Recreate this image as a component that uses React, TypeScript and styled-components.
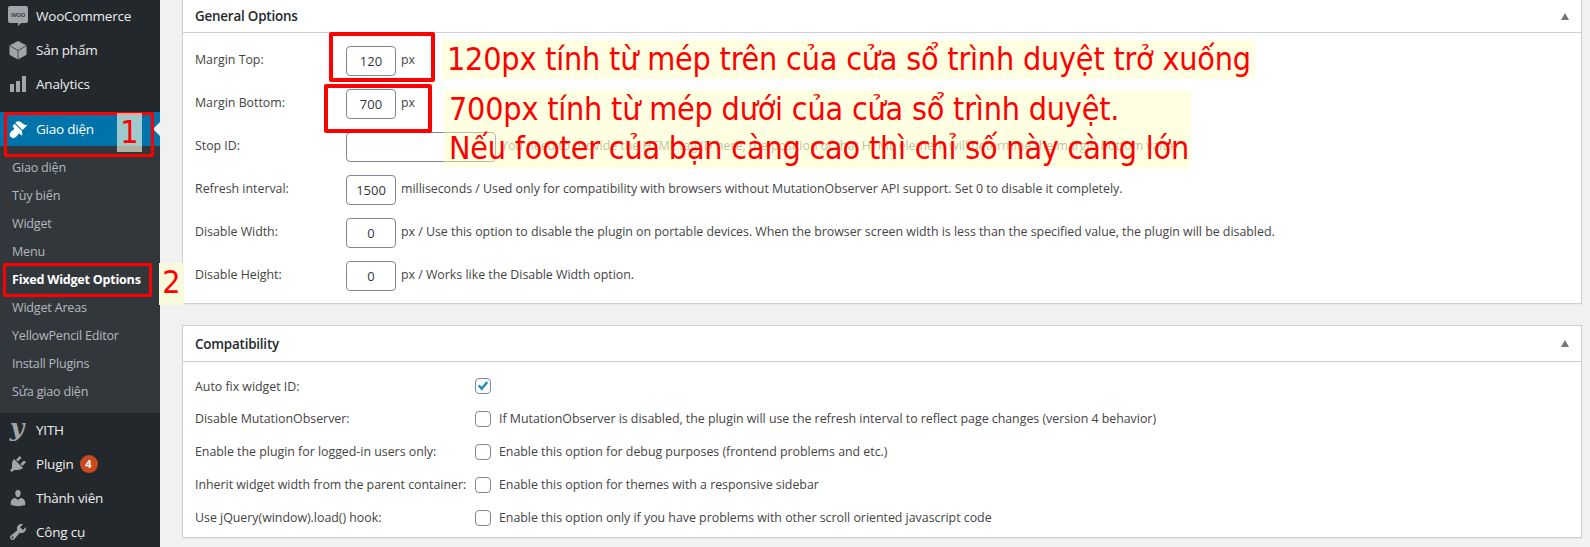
import React from "react";
import styled, { createGlobalStyle } from "styled-components";

const UI_FONT = `"Open Sans", "Noto Sans", sans-serif`;
const NOTE_FONT = `"DejaVu Sans Condensed", "DejaVu Sans", sans-serif`;

const GlobalStyle = createGlobalStyle`
  html, body { margin: 0; padding: 0; background: #f1f1f1; }
  body { font-family: ${UI_FONT}; font-size: 13px; }
  * { box-sizing: border-box; }
`;

//layout//

const Page = styled.div`
  position: relative;
  display: flex;
  width: 1590px;
  height: 547px;
  overflow: hidden;
`;

const Sidebar = styled.nav`
  width: 160px;
  flex-shrink: 0;
  background: #23282d;
  margin-top: -1px;
`;

const MenuGroup = styled.div<{ $gap?: number }>`
  margin-bottom: ${(p) => p.$gap ?? 0}px;
`;

const MenuItem = styled.div<{ $active?: boolean }>`
  position: relative;
  display: flex;
  align-items: center;
  height: 34px;
  padding-left: 8px;
  color: ${(p) => (p.$active ? "#fff" : "#eee")};
  background: ${(p) => (p.$active ? "#0073aa" : "transparent")};
  font-size: 13.5px;
  letter-spacing: -0.22px;
  svg {
    flex-shrink: 0;
    margin-right: 8px;
  }
  ${(p) =>
    p.$active &&
    `&::after {
      content: "";
      position: absolute;
      right: 0;
      top: 10px;
      border: 7px solid transparent;
      border-right-color: #f1f1f1;
      border-left-width: 0;
    }`}
`;

const SubMenu = styled.div`
  background: #32373c;
  padding: 7px 0 7px;
`;

const SubItem = styled.div<{ $current?: boolean }>`
  display: flex;
  align-items: center;
  height: 28.1px;
  padding-left: 12px;
  color: ${(p) => (p.$current ? "#fff" : "#b4b9be")};
  font-weight: ${(p) => (p.$current ? 700 : 400)};
  font-size: 12.6px;
  letter-spacing: ${(p) => (p.$current ? "-0.25px" : "-0.22px")};
`;

const Badge = styled.span`
  display: inline-flex;
  align-items: center;
  justify-content: center;
  width: 18px;
  height: 18px;
  margin-left: 6px;
  border-radius: 50%;
  background: #ca4a1f;
  color: #fff;
  font-size: 11px;
  font-weight: 700;
  letter-spacing: 0;
`;

const Main = styled.main`
  flex: 1;
  padding: 0 8px 0 22px;
`;

const Card = styled.section<{ $clipped?: boolean; $height: number }>`
  height: ${(p) => p.$height}px;
  margin-bottom: 21px;
  background: #fff;
  border: 1px solid #ccd0d4;
  border-top-width: ${(p) => (p.$clipped ? 0 : 1)}px;
  box-shadow: 0 1px 1px rgba(0, 0, 0, 0.04);
`;

const CardHeader = styled.header<{ $height: number }>`
  display: flex;
  align-items: center;
  justify-content: space-between;
  height: ${(p) => p.$height}px;
  padding: 0 12px;
  border-bottom: 1px solid #ccd0d4;
`;

const CardTitle = styled.h2`
  margin: 0;
  font-size: 13.4px;
  font-weight: 600;
  letter-spacing: -0.2px;
  color: #23282d;
`;

const CollapseArrow = styled.span`
  width: 0;
  height: 0;
  border-left: 4px solid transparent;
  border-right: 4px solid transparent;
  border-bottom: 7px solid #72777c;
`;

const OptionList = styled.div`
  padding-top: 13px;
`;

const OptionRow = styled.div`
  display: flex;
  align-items: center;
  height: 30px;
  margin-bottom: 13px;
  color: #444;
  font-size: 12.4px;
  letter-spacing: -0.02px;
`;

const OptionLabel = styled.div`
  width: 163px;
  flex-shrink: 0;
  padding: 0 0 4px 12px;
`;

const NumberInput = styled.input<{ $wide?: boolean }>`
  width: ${(p) => (p.$wide ? 150 : 50)}px;
  height: 30px;
  padding: 0;
  border: 1px solid #7e8993;
  border-radius: 4px;
  background: #fff;
  color: #32373c;
  font-family: ${UI_FONT};
  font-size: 13px;
  text-align: center;
  outline: none;
`;

const OptionNote = styled.span<{ $muted?: boolean }>`
  margin-left: 5px;
  padding-bottom: 3px;
  white-space: nowrap;
  color: ${(p) => (p.$muted ? "#8f8f8f" : "#444")};
`;

const CheckList = styled.div`
  padding-top: 16px;
`;

const CheckRow = styled.div`
  display: flex;
  align-items: center;
  height: 16px;
  margin-bottom: 16.9px;
  padding-left: 12px;
  color: #444;
  font-size: 12.4px;
  letter-spacing: -0.02px;
`;

const CheckLabel = styled.div`
  width: 280px;
  flex-shrink: 0;
  white-space: nowrap;
`;

const CheckBox = styled.span`
  display: inline-flex;
  align-items: center;
  justify-content: center;
  width: 16px;
  height: 16px;
  flex-shrink: 0;
  margin-right: 8px;
  border: 1px solid #7e8993;
  border-radius: 4px;
  background: #fff;
`;

//annotations drawn over the page//

const RedBox = styled.div<{ $x: number; $y: number; $w: number; $h: number; $t?: number }>`
  position: absolute;
  left: ${(p) => p.$x}px;
  top: ${(p) => p.$y}px;
  width: ${(p) => p.$w}px;
  height: ${(p) => p.$h}px;
  border: ${(p) => p.$t ?? 4}px solid #fe0000;
  border-radius: 2px;
`;

const StepNumber = styled.div<{ $x: number; $y: number; $h: number; $soft?: boolean }>`
  position: absolute;
  left: ${(p) => p.$x}px;
  top: ${(p) => p.$y}px;
  width: 25px;
  height: ${(p) => p.$h}px;
  background: ${(p) => (p.$soft ? "rgba(255, 255, 224, 0.62)" : "#f9f9dc")};
  color: #fe0000;
  font-family: ${NOTE_FONT};
  font-size: 32px;
  line-height: 38px;
  text-align: center;
`;

const Callout = styled.div<{ $x: number; $y: number; $w: number }>`
  position: absolute;
  left: ${(p) => p.$x}px;
  top: ${(p) => p.$y}px;
  width: ${(p) => p.$w}px;
  padding-left: 5px;
  background: rgba(255, 255, 190, 0.45);
  color: #fe0000;
  font-family: ${NOTE_FONT};
  font-size: 32px;
  letter-spacing: -0.2px;
  line-height: 39px;
  white-space: nowrap;
`;

////////////////////

const ICON = "#a0a5aa";

const WooIcon = () => (
  <svg width="20" height="24" viewBox="0 0 20 24">
    <path d="M2 2h16a2 2 0 0 1 2 2v13a2 2 0 0 1-2 2h-5l-3 3v-3H2a2 2 0 0 1-2-2V4a2 2 0 0 1 2-2z" fill={ICON} />
    <text x="10" y="13" textAnchor="middle" fontSize="8" fill="#23282d" fontFamily="Liberation Sans, sans-serif">woo</text>
  </svg>
);

const BoxIcon = () => (
  <svg width="20" height="20" viewBox="0 0 20 20">
    <path d="M10 1l8.5 4.6v9.2L10 19.4 1.500 14.8V5.600z" fill={ICON} />
    <path d="M1.500 5.600L10 10.500l8.500-4.900M10 10.500v8.900" fill="none" stroke="#23282d" strokeWidth="0.7" />
  </svg>
);

const DashIcon = ({ d, color = ICON }: { d: string; color?: string }) => (
  <svg width="20" height="20" viewBox="0 0 20 20">
    <path d={d} fill={color} />
  </svg>
);

const YithIcon = () => (
  <svg width="20" height="28" viewBox="0 0 20 28">
    <text x="9" y="20" textAnchor="middle" fontSize="25" fontStyle="italic" fontWeight="700" fill={ICON} fontFamily="DejaVu Serif, serif">y</text>
  </svg>
);

const CheckMark = () => (
  <svg width="14" height="14" viewBox="0 0 14 14">
    <path d="M1.800 7.200l1.700-1.700 2.200 2.300 4.700-5.600 1.800 1.500-6.400 7.700z" fill="#1e8cbe" />
  </svg>
);

const paths = {
  chart: "M18 18V2h-4v16h4zm-6 0V7H8v11h4zm-6 0v-8H2v8h4z",
  brush:
    "M14.480 11.060L7.410 3.990l1.500-1.500c.5-.56 2.300-.47 3.510.32 1.210.8 1.430 1.280 2.910 2.100 1.180.64 2.450 1.260 4.450.85zm-.71.71L6.700 4.700 4.930 6.470c-.39.39-.39 1.020 0 1.410l1.060 1.060c.39.39.39 1.030 0 1.420-.6.6-1.430 1.110-2.210 1.690-.35.26-.7.53-1.010.84-1.430 1.430-1.400 3.750.03 5.180 1.430 1.430 3.750 1.460 5.180.03.31-.31.58-.66.84-1.010.58-.78 1.090-1.610 1.690-2.210.39-.39 1.030-.39 1.420 0l1.060 1.060c.39.39 1.020.39 1.410 0z",
  plugin:
    "M13.110 4.360L9.870 7.600 8 5.730l3.240-3.240c.35-.34 1.050-.2 1.560.32.52.51.66 1.210.31 1.550zm-8 1.770l.91-1.120 9.010 9.010-1.190.84c-.71.71-2.630 1.160-3.820 1.160H6.140L4.900 17.260c-.59.59-1.540.59-2.120 0-.59-.58-.59-1.530 0-2.120l1.240-1.240v-3.880c0-1.130.4-3.190 1.090-3.890zm7.260 3.970l3.240-3.240c.34-.35 1.040-.21 1.550.31.52.51.66 1.210.31 1.550l-3.240 3.250z",
  users:
    "M10 9.250c-2.270 0-2.730-3.440-2.730-3.440C7 4.020 7.820 2 9.970 2c2.160 0 2.980 2.020 2.710 3.810 0 0-.41 3.440-2.680 3.440zm0 2.570L12.720 10c2.390 0 4.520 2.330 4.520 4.530v2.490s-3.650 1.130-7.240 1.130c-3.650 0-7.240-1.130-7.240-1.130v-2.490c0-2.250 1.940-4.480 4.470-4.480z",
  tools:
    "M16.680 9.770c-1.340 1.340-3.300 1.670-4.950.99l-5.410 6.520c-.99.99-2.590.99-3.580 0s-.99-2.590 0-3.570l6.520-5.420c-.68-1.650-.35-3.610.99-4.950 1.280-1.280 3.120-1.620 4.720-1.060l-2.890 2.890 2.820 2.820 2.860-2.870c.53 1.580.18 3.390-1.080 4.650zM3.810 16.210c.4.39 1.040.39 1.430 0 .4-.4.4-1.040 0-1.430-.39-.4-1.030-.4-1.430 0-.39.39-.39 1.030 0 1.430z",
};

const subItems = [
  "Giao diện",
  "Tùy biến",
  "Widget",
  "Menu",
  "Fixed Widget Options",
  "Widget Areas",
  "YellowPencil Editor",
  "Install Plugins",
  "Sửa giao diện",
];

const generalOptions = [
  { label: "Margin Top:", value: "120", note: "px" },
  { label: "Margin Bottom:", value: "700", note: "px" },
  {
    label: "Stop ID:",
    value: "",
    wide: true,
    muted: true,
    note: "You need to provide the HTML tag ID here, the position of that HTML element will determine the margin bottom value",
  },
  {
    label: "Refresh interval:",
    value: "1500",
    note: "milliseconds / Used only for compatibility with browsers without MutationObserver API support. Set 0 to disable it completely.",
  },
  {
    label: "Disable Width:",
    value: "0",
    note: "px / Use this option to disable the plugin on portable devices. When the browser screen width is less than the specified value, the plugin will be disabled.",
  },
  { label: "Disable Height:", value: "0", note: "px / Works like the Disable Width option." },
];

const compatibility = [
  { label: "Auto fix widget ID:", checked: true, note: "" },
  {
    label: "Disable MutationObserver:",
    note: "If MutationObserver is disabled, the plugin will use the refresh interval to reflect page changes (version 4 behavior)",
  },
  {
    label: "Enable the plugin for logged-in users only:",
    note: "Enable this option for debug purposes (frontend problems and etc.)",
  },
  {
    label: "Inherit widget width from the parent container:",
    note: "Enable this option for themes with a responsive sidebar",
  },
  {
    label: "Use jQuery(window).load() hook:",
    note: "Enable this option only if you have problems with other scroll oriented javascript code",
  },
];

const App = () => {
  return (
    <Page>
      <GlobalStyle />
      <Sidebar>
        <MenuGroup $gap={11}>
          <MenuItem><WooIcon />WooCommerce</MenuItem>
          <MenuItem><BoxIcon />Sản phẩm</MenuItem>
          <MenuItem><DashIcon d={paths.chart} />Analytics</MenuItem>
        </MenuGroup>
        <MenuItem $active><DashIcon d={paths.brush} color="#fff" />Giao diện</MenuItem>
        <SubMenu>
          {subItems.map((item, index) => (
            <SubItem key={index} $current={item === "Fixed Widget Options"}>{item}</SubItem>
          ))}
        </SubMenu>
        <MenuItem><YithIcon />YITH</MenuItem>
        <MenuItem><DashIcon d={paths.plugin} />Plugin<Badge>4</Badge></MenuItem>
        <MenuItem><DashIcon d={paths.users} />Thành viên</MenuItem>
        <MenuItem><DashIcon d={paths.tools} />Công cụ</MenuItem>
      </Sidebar>

      <Main>
        <Card $clipped $height={304}>
          <CardHeader $height={33}>
            <CardTitle>General Options</CardTitle>
            <CollapseArrow />
          </CardHeader>
          <OptionList>
            {generalOptions.map((option, index) => (
              <OptionRow key={index}>
                <OptionLabel>{option.label}</OptionLabel>
                <NumberInput $wide={option.wide} defaultValue={option.value} readOnly />
                <OptionNote $muted={option.muted}>{option.note}</OptionNote>
              </OptionRow>
            ))}
          </OptionList>
        </Card>

        <Card $height={213}>
          <CardHeader $height={36}>
            <CardTitle>Compatibility</CardTitle>
            <CollapseArrow />
          </CardHeader>
          <CheckList>
            {compatibility.map((option, index) => (
              <CheckRow key={index}>
                <CheckLabel>{option.label}</CheckLabel>
                <CheckBox>{option.checked && <CheckMark />}</CheckBox>
                {option.note}
              </CheckRow>
            ))}
          </CheckList>
        </Card>
      </Main>

      <RedBox $x={4} $y={112} $w={150} $h={45} $t={3} />
      <RedBox $x={3} $y={263} $w={149} $h={34} $t={3} />
      <RedBox $x={329} $y={32} $w={106} $h={50} />
      <RedBox $x={324} $y={84} $w={108} $h={49} />
      <StepNumber $x={117} $y={113} $h={39} $soft>1</StepNumber>
      <StepNumber $x={159} $y={263} $h={42}>2</StepNumber>
      <Callout $x={442} $y={40} $w={813}>120px tính từ mép trên của cửa sổ trình duyệt trở xuống</Callout>
      <Callout $x={444} $y={90} $w={747}>
        700px tính từ mép dưới của cửa sổ trình duyệt.
        <br />
        Nếu footer của bạn càng cao thì chỉ số này càng lớn
      </Callout>
    </Page>
  );
};

export default App;
